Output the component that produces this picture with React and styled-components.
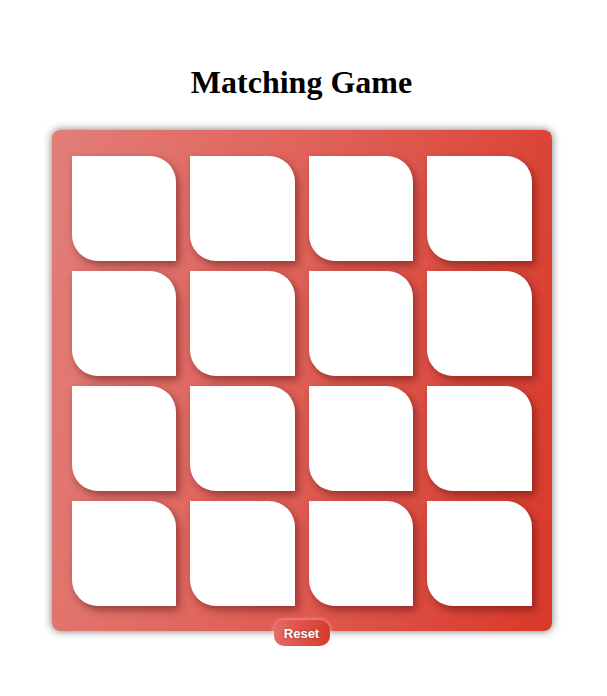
import styled, { createGlobalStyle } from "styled-components";

const GlobalStyle = createGlobalStyle`
  body {
    margin: 0;
    background: #ffffff;
    font-family: "Liberation Serif", "Times New Roman", serif;
  }
`;

const Page = styled.div`
  display: flex;
  flex-direction: column;
  align-items: center;
  padding-top: 64px;
  padding-right: 4px;
`;

const Title = styled.h1`
  margin: 0 0 30px;
  font-size: 32px;
  font-weight: bold;
  color: #000;
  line-height: 36px;
`;

const Board = styled.div`
  width: 500px;
  box-sizing: border-box;
  padding: 26px 20px 25px;
  display: grid;
  grid-template-columns: repeat(4, 1fr);
  column-gap: 14px;
  row-gap: 10px;
  border-radius: 8px;
  background: linear-gradient(100deg, #e27e78 0%, #e0625a 45%, #d9392a 100%);
  box-shadow: 0 0 9px rgba(0, 0, 0, 0.55);
`;

const Card = styled.div`
  height: 105px;
  background: #ffffff;
  border-radius: 0 26px 0 26px;
  box-shadow: 3px 4px 9px rgba(60, 0, 0, 0.45);
`;

const ResetButton = styled.button`
  margin-top: -11px;
  width: 56px;
  height: 26px;
  border: none;
  border-radius: 10px;
  background: linear-gradient(90deg, #e46b64, #d93a2b);
  color: #ffffff;
  font-family: "Liberation Sans", Arial, sans-serif;
  font-weight: bold;
  font-size: 13px;
  text-shadow: 0 0 3px rgba(0, 0, 0, 0.35);
  box-shadow: 0 0 4px rgba(255, 255, 255, 0.6);
  cursor: pointer;
  position: relative;
`;

export default function App() {
  const cards = Array.from({ length: 16 }, (_, i) => i);
  return (
    <>
      <GlobalStyle />
      <Page>
        <Title>Matching Game</Title>
        <Board>
          {cards.map((i) => (
            <Card key={i} />
          ))}
        </Board>
        <ResetButton>Reset</ResetButton>
      </Page>
    </>
  );
}
